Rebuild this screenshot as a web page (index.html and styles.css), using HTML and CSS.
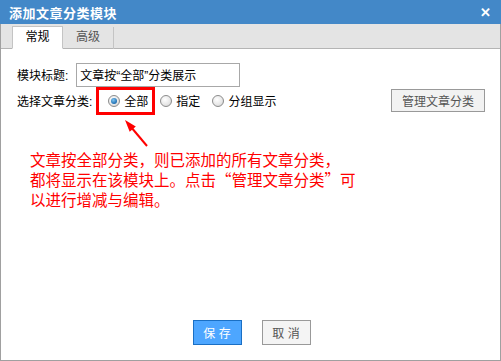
FILE: index.html
```html
<!DOCTYPE html>
<html>
<head>
  <meta charset="utf-8">
  <title>添加文章分类模块</title>
  <link rel="stylesheet" href="styles.css">
</head>
<body>
  <div class="dialog">
    <div class="title-bar">
      <span class="title">添加文章分类模块</span>
      <span class="close">&#x2715;</span>
    </div>

    <div class="tabs">
      <div class="tab active">常规</div>
      <div class="tab">高级</div>
    </div>

    <div class="body">
      <div class="row">
        <label class="field-label">模块标题:</label>
        <input class="text-input" type="text" value="文章按“全部”分类展示">
      </div>

      <div class="row">
        <label class="field-label">选择文章分类:</label>
        <div class="radio-group">
          <label class="radio highlight"><span class="dot checked"></span>全部</label>
          <label class="radio"><span class="dot"></span>指定</label>
          <label class="radio"><span class="dot"></span>分组显示</label>
        </div>
        <button class="manage-btn">管理文章分类</button>
      </div>

      <div class="note">
        <svg class="arrow" width="30" height="32" viewBox="0 0 30 32">
          <line x1="26" y1="29" x2="10" y2="10" stroke="#f00" stroke-width="2"/>
          <polygon points="4,3 14.8,9.6 8.7,14.7" fill="#f00"/>
        </svg>
        <p class="note-text">文章按全部分类，则已添加的所有文章分类，<br>都将显示在该模块上。点击“管理文章分类”可<br>以进行增减与编辑。</p>
      </div>
    </div>

    <div class="footer">
      <button class="btn primary">保 存</button>
      <button class="btn">取 消</button>
    </div>
  </div>
</body>
</html>
```

FILE: styles.css
```css
* {
  box-sizing: border-box;
}

body {
  margin: 0;
  font-family: "Liberation Sans", "Noto Sans CJK SC", sans-serif;
  font-size: 12px;
  color: #000;
  background: #fff;
}

.dialog {
  width: 501px;
  height: 361px;
  border: 1px solid #a0a0a0;
  border-top: none;
  display: flex;
  flex-direction: column;
}

.title-bar {
  height: 24px;
  background: #4388c8;
  margin: 0 -1px;
  padding: 0 10px 0 9px;
  display: flex;
  align-items: center;
  justify-content: space-between;
  color: #fff;
}

.title {
  font-size: 13px;
  font-weight: bold;
  letter-spacing: 0.5px;
}

.close {
  font-size: 13px;
  font-weight: bold;
}

.tabs {
  height: 25px;
  background: #e4e4e4;
  border-bottom: 1px solid #b4b4b4;
  padding-left: 11px;
  display: flex;
  align-items: flex-end;
}

.tab {
  width: 51px;
  height: 22px;
  line-height: 21px;
  text-align: center;
  color: #555;
  border-right: 1px solid #c4c4c4;
  margin-bottom: -1px;
}

.tab.active {
  background: #fff;
  color: #000;
  border: 1px solid #c4c4c4;
  border-bottom-color: #fff;
  height: 23px;
}

.body {
  flex: 1;
  padding: 13px 16px 0 16px;
}

.row {
  display: flex;
  align-items: center;
  height: 25px;
  margin-bottom: 1px;
}

.field-label {
  white-space: nowrap;
}

.text-input {
  width: 164px;
  height: 24px;
  margin-left: 8px;
  border: 1px solid #a8a8a8;
  padding: 0 3px;
  font-family: inherit;
  font-size: 12px;
  color: #000;
}

.radio-group {
  display: flex;
  align-items: center;
  margin-left: 4px;
}

.radio {
  display: flex;
  align-items: center;
  gap: 4px;
  padding: 0 6px 0 8px;
  height: 28px;
  border: 3px solid transparent;
  white-space: nowrap;
}

.radio.highlight {
  border-color: #f00;
  padding-left: 9px;
  padding-right: 4px;
  margin-right: 2px;
}

.radio + .radio {
  padding-left: 0;
}

.dot {
  width: 12px;
  height: 12px;
  border-radius: 50%;
  border: 1px solid #8c8c8c;
  background: radial-gradient(circle at 40% 35%, #fff 0%, #e6e6e6 60%, #c8c8c8 100%);
  position: relative;
}

.dot.checked::after {
  content: "";
  position: absolute;
  left: 2px;
  top: 2px;
  width: 6px;
  height: 6px;
  border-radius: 50%;
  background: radial-gradient(circle at 40% 35%, #7fc4f0 0%, #1f6fb2 70%, #0d4a86 100%);
}

.manage-btn {
  margin-left: auto;
  margin-right: -1px;
  width: 94px;
  height: 23px;
  border: 1px solid #999;
  background: #f2f2f2;
  color: #555;
  font-family: inherit;
  font-size: 12px;
  padding: 0;
}

.note {
  display: flex;
  flex-direction: column;
  align-items: flex-start;
  padding-left: 13px;
}

.arrow {
  margin-left: 91px;
  margin-top: 3px;
}

.note-text {
  margin: 0;
  white-space: nowrap;
  color: #f00;
  font-family: "Noto Sans CJK SC", sans-serif;
  font-size: 15.5px;
  line-height: 20px;
}

.footer {
  display: flex;
  justify-content: center;
  gap: 20px;
  padding: 0 0 15px 2px;
}

.btn {
  width: 49px;
  height: 25px;
  border: 1px solid #999;
  background: #f4f4f4;
  color: #555;
  font-family: inherit;
  font-size: 12px;
  padding: 0;
}

.btn.primary {
  background: #4da6ff;
  border-color: #1a6fc4;
  color: #fff;
}
```
